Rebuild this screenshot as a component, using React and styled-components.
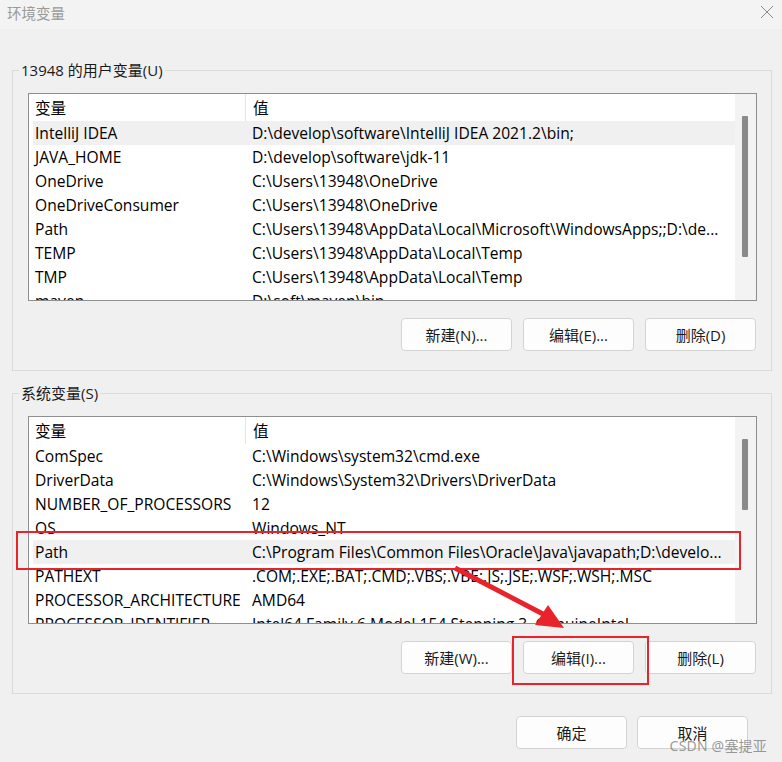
import React from 'react';
import styled, { createGlobalStyle } from 'styled-components';

const GlobalStyle = createGlobalStyle`
  html, body {
    margin: 0;
    padding: 0;
    background: #f0f0f0;
  }
  body {
    font-family: "Open Sans", "Noto Sans CJK SC", sans-serif;
    color: #000;
  }
`;

const Window = styled.div`
  position: relative;
  width: 782px;
  height: 762px;
  background: #f0f0f0;
  overflow: hidden;
`;

const TitleBar = styled.div`
  height: 29px;
  display: flex;
  align-items: center;
  justify-content: space-between;
  padding: 0 8px 5px 7px;
  box-sizing: border-box;
  background: #f3f3f3;
`;

const Title = styled.span`
  font-family: "Noto Sans CJK SC", sans-serif;
  font-size: 14.5px;
  color: #9a9a9a;
`;

const CloseIcon = styled.svg`
  width: 14px;
  height: 14px;
`;

const Body = styled.div`
  padding: 31px 10px 0 12px;
  display: flex;
  flex-direction: column;
  gap: 12px;
`;

const Group = styled.fieldset`
  margin: 0;
  border: 1px solid #dadada;
  padding: 13px 14px 19px 15px;
  display: flex;
  flex-direction: column;
  gap: 17px;
`;

const Legend = styled.legend`
  font-family: "Open Sans", "Noto Sans CJK SC", sans-serif;
  font-size: 15px;
  line-height: 20px;
  padding: 0 2px;
  margin-left: -9px;
  color: #1a1a1a;
`;

const ListBox = styled.div`
  height: 208px;
  border: 1px solid #8e8f92;
  background: #fff;
  box-sizing: border-box;
  display: flex;
  overflow: hidden;
`;

const Table = styled.div`
  flex: 1;
  padding-left: 4px;
  overflow: hidden;
`;

const Row = styled.div`
  display: grid;
  grid-template-columns: 212px 1fr;
  height: ${p => (p.$header ? 27 : 24)}px;
  align-items: center;
  background: ${p => (p.$selected ? '#f0f0f0' : 'transparent')};
  font-size: 15.6px;
  white-space: nowrap;
`;

const Cell = styled.div`
  padding-left: ${p => (p.$value ? 7 : 2)}px;
  overflow: hidden;
  height: 100%;
  display: flex;
  align-items: center;
  border-left: ${p => (p.$divider ? '1px solid #e5e5e5' : 'none')};
  font-family: "Open Sans", "Noto Sans CJK SC", sans-serif;
`;

const ScrollTrack = styled.div`
  width: 21px;
  background: #f3f3f3;
  position: relative;
`;

const Thumb = styled.div`
  position: absolute;
  left: 7px;
  width: 6px;
  background: #8a8a8a;
  border-radius: 1px;
`;

const ButtonRow = styled.div`
  display: flex;
  justify-content: flex-end;
  gap: 11px;
  padding-right: 1px;
`;

const Button = styled.button`
  width: 111px;
  height: 33px;
  border: 1px solid #d3d3d3;
  border-radius: 4px;
  background: #fdfdfd;
  font-family: "Open Sans", "Noto Sans CJK SC", sans-serif;
  font-size: 15px;
  color: #1a1a1a;
  padding: 0;
`;

const Footer = styled.div`
  display: flex;
  justify-content: flex-end;
  gap: 10px;
  padding: 22px 34px 0 0;
`;

const Watermark = styled.div`
  position: absolute;
  right: 15px;
  bottom: 7px;
  font-family: "Noto Sans", "Noto Sans CJK SC", sans-serif;
  font-size: 14px;
  color: rgba(120, 120, 120, 0.75);
  letter-spacing: 0.2px;
`;

const Annotations = styled.svg`
  position: absolute;
  left: 0;
  top: 0;
  width: 782px;
  height: 762px;
  pointer-events: none;
`;

const userVars = [
  ['IntelliJ IDEA', 'D:\\develop\\software\\IntelliJ IDEA 2021.2\\bin;'],
  ['JAVA_HOME', 'D:\\develop\\software\\jdk-11'],
  ['OneDrive', 'C:\\Users\\13948\\OneDrive'],
  ['OneDriveConsumer', 'C:\\Users\\13948\\OneDrive'],
  ['Path', 'C:\\Users\\13948\\AppData\\Local\\Microsoft\\WindowsApps;;D:\\de...'],
  ['TEMP', 'C:\\Users\\13948\\AppData\\Local\\Temp'],
  ['TMP', 'C:\\Users\\13948\\AppData\\Local\\Temp'],
  ['maven', 'D:\\soft\\maven\\bin'],
];

const systemVars = [
  ['ComSpec', 'C:\\Windows\\system32\\cmd.exe'],
  ['DriverData', 'C:\\Windows\\System32\\Drivers\\DriverData'],
  ['NUMBER_OF_PROCESSORS', '12'],
  ['OS', 'Windows_NT'],
  ['Path', 'C:\\Program Files\\Common Files\\Oracle\\Java\\javapath;D:\\develo...'],
  ['PATHEXT', '.COM;.EXE;.BAT;.CMD;.VBS;.VBE;.JS;.JSE;.WSF;.WSH;.MSC'],
  ['PROCESSOR_ARCHITECTURE', 'AMD64'],
  ['PROCESSOR_IDENTIFIER', 'Intel64 Family 6 Model 154 Stepping 3, GenuineIntel'],
];

const VarList = ({ rows, selected, thumbTop, thumbHeight }) => (
  <ListBox>
    <Table>
      <Row $header>
        <Cell>变量</Cell>
        <Cell $value $divider>值</Cell>
      </Row>
      {rows.map(([name, value], i) => (
        <Row key={name + i} $selected={i === selected}>
          <Cell>{name}</Cell>
          <Cell $value>{value}</Cell>
        </Row>
      ))}
    </Table>
    <ScrollTrack>
      <Thumb style={{ top: thumbTop, height: thumbHeight }} />
    </ScrollTrack>
  </ListBox>
);

const App = () => (
  <Window>
    <GlobalStyle />
    <TitleBar>
      <Title>环境变量</Title>
      <CloseIcon viewBox="0 0 14 14">
        <path d="M1 1L13 13M13 1L1 13" stroke="#8a8a8a" strokeWidth="1" fill="none" />
      </CloseIcon>
    </TitleBar>
    <Body>
      <Group>
        <Legend>13948 的用户变量(U)</Legend>
        <VarList rows={userVars} selected={0} thumbTop={22} thumbHeight={141} />
        <ButtonRow>
          <Button>新建(N)...</Button>
          <Button>编辑(E)...</Button>
          <Button>删除(D)</Button>
        </ButtonRow>
      </Group>
      <Group>
        <Legend>系统变量(S)</Legend>
        <VarList rows={systemVars} selected={4} thumbTop={22} thumbHeight={71} />
        <ButtonRow>
          <Button>新建(W)...</Button>
          <Button>编辑(I)...</Button>
          <Button>删除(L)</Button>
        </ButtonRow>
      </Group>
    </Body>
    <Footer>
      <Button>确定</Button>
      <Button>取消</Button>
    </Footer>
    <Watermark>CSDN @塞提亚</Watermark>
    <Annotations viewBox="0 0 782 762">
      <rect x="17" y="532" width="723" height="37" fill="none" stroke="#e8232b" strokeWidth="2" />
      <rect x="513" y="637" width="135" height="47" fill="none" stroke="#e8232b" strokeWidth="2" />
      <line x1="455" y1="568" x2="543" y2="614" stroke="#e8232b" strokeWidth="5" />
      <polygon points="548,605 535,625 564,628" fill="#e8232b" />
    </Annotations>
  </Window>
);

export default App;
